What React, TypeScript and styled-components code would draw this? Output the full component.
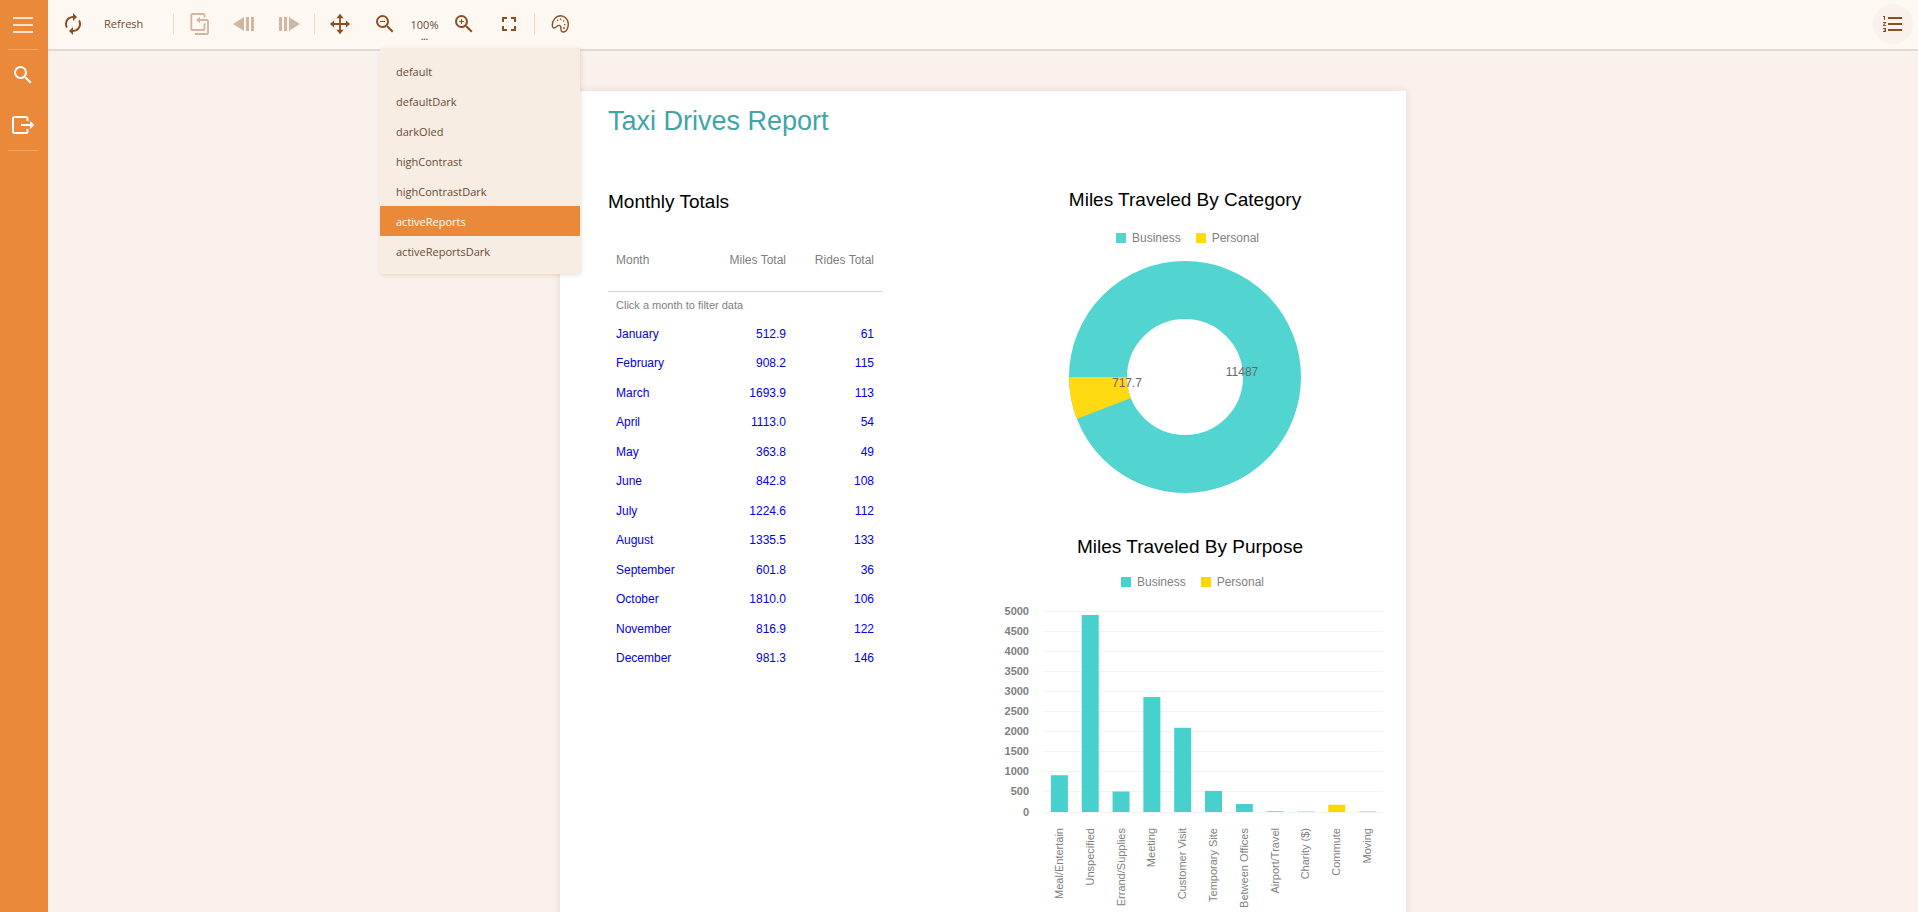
import React from "react";
import styled, { createGlobalStyle, ThemeProvider } from "styled-components";
import {
  MdAutorenew,
  MdFormatListNumbered,
  MdFullscreen,
  MdSearch,
  MdZoomIn,
  MdZoomOut,
} from "react-icons/md";

const theme = {
  accent: "#e98939",
  brown: "#8d4f22",
  text: "#6b4a33",
  toolbar: "#fdf8f1",
  canvas: "#faf1ec",
  menu: "#f7ede3",
  divider: "#ecdac9",
  teal: "#48d1cc",
  gold: "#ffd700",
  ui: '"Open Sans", "Noto Sans", sans-serif',
  report: '"Liberation Sans", Arial, sans-serif',
};

const GlobalStyle = createGlobalStyle`
  * { box-sizing: border-box; }
  body { margin: 0; }
  button { border: 0; padding: 0; background: none; color: inherit; font: inherit; cursor: pointer; }
  svg { display: block; }
`;

const Shell = styled.div`
  display: flex;
  height: 100vh;
  background: ${(p) => p.theme.canvas};
  font-family: ${(p) => p.theme.ui};
  font-size: 11px;
`;

const Sidebar = styled.nav`
  flex: 0 0 48px;
  display: flex;
  flex-direction: column;
  align-items: center;
  padding-right: 2px;
  background: ${(p) => p.theme.accent};
  color: #fff;
`;

const SideButton = styled.button<{ $height: number }>`
  display: grid;
  place-items: center;
  width: 46px;
  height: ${(p) => p.$height}px;
`;

const SideDivider = styled.span`
  width: 30px;
  height: 1px;
  background: rgba(255, 255, 255, 0.25);
`;

const Viewer = styled.div`
  flex: 1;
  min-width: 0;
  display: flex;
  flex-direction: column;
`;

const Toolbar = styled.header`
  display: flex;
  align-items: center;
  gap: 5px;
  padding: 4px 5px 5px;
  background: ${(p) => p.theme.toolbar};
  border-bottom: 2px solid #dfdad6;
  color: ${(p) => p.theme.brown};
`;

const ToolButton = styled.button<{ $raised?: boolean }>`
  display: grid;
  place-items: center;
  width: 40px;
  height: 40px;
  border-radius: 50%;
  background: ${(p) => (p.$raised ? p.theme.canvas : "none")};

  &:disabled {
    color: #d3b6a1;
    cursor: default;
  }
`;

const RefreshButton = styled.button`
  display: flex;
  align-items: center;
  gap: 19px;
  width: 115px;
  height: 40px;
  padding-left: 8px;
`;

const ToolText = styled.span`
  color: ${(p) => p.theme.text};
  line-height: 16px;
`;

const ZoomValue = styled.button`
  display: flex;
  flex-direction: column;
  align-items: center;
  justify-content: flex-end;
  width: 29px;
  height: 40px;
  color: ${(p) => p.theme.text};
  line-height: 16px;
`;

const Dots = styled.span`
  height: 11px;
  font-size: 8px;
  font-weight: 700;
  line-height: 8px;
`;

const Separator = styled.span`
  width: 1px;
  height: 20px;
  background: ${(p) => p.theme.divider};
`;

const Spacer = styled.span`
  flex: 1;
`;

const ThemePicker = styled.div`
  position: relative;
`;

const Menu = styled.div`
  position: absolute;
  z-index: 2;
  top: 44px;
  right: 0;
  display: flex;
  flex-direction: column;
  width: 200px;
  padding: 8px 0;
  border-radius: 2px;
  background: ${(p) => p.theme.menu};
  box-shadow: 1px 1px 4px rgba(141, 79, 34, 0.18);
`;

const MenuItem = styled.button<{ $selected: boolean }>`
  height: 30px;
  padding: 0 16px;
  text-align: left;
  color: ${(p) => (p.$selected ? "#fff" : p.theme.text)};
  background: ${(p) => (p.$selected ? p.theme.accent : "none")};
`;

const Canvas = styled.main`
  flex: 1;
  min-height: 0;
  display: flex;
  justify-content: center;
  align-items: flex-start;
  padding: 40px 16px;
  overflow: auto;
  scrollbar-width: none;
`;

const Paper = styled.article`
  width: 100%;
  max-width: 846px;
  padding: 14px 16px 160px 48px;
  background: #fff;
  box-shadow: 0 0 8px rgba(80, 40, 20, 0.12);
  font-family: ${(p) => p.theme.report};
  font-size: 12px;
  line-height: 14px;
  color: #808080;
`;

const Title = styled.h1`
  margin: 0 0 51px;
  font-size: 27px;
  font-weight: 400;
  line-height: 32px;
  color: #3fa5a8;
`;

const Heading = styled.h2`
  margin: 0;
  font-size: 19px;
  font-weight: 400;
  line-height: 24px;
  color: #000;
`;

const Columns = styled.div`
  display: grid;
  grid-template-columns: 274px minmax(0, 410px);
  justify-content: space-between;
  align-items: start;
`;

const Totals = styled.section`
  padding-top: 2px;
`;

const TotalsTable = styled.table`
  width: 100%;
  margin-top: 31px;
  border-collapse: collapse;
  table-layout: fixed;
`;

const HeadCell = styled.th<{ $right?: boolean; $width: number }>`
  width: ${(p) => p.$width}px;
  padding: 8px 8px 24px;
  border-bottom: 1px solid #d3d3d3;
  font-weight: 400;
  text-align: ${(p) => (p.$right ? "right" : "left")};
`;

const HintCell = styled.td`
  height: 27px;
  padding: 6px 8px 0;
  vertical-align: top;
  font-size: 11px;
`;

const MonthRow = styled.tr`
  height: 29px;
  color: #0000ee;

  &:nth-child(odd) {
    height: 30px;
  }
`;

const Cell = styled.td<{ $right?: boolean }>`
  padding: 8px 8px 0;
  vertical-align: top;
  text-align: ${(p) => (p.$right ? "right" : "left")};
`;

const MonthLink = styled.a`
  color: inherit;
  text-decoration: none;
`;

const Charts = styled.section`
  display: flex;
  flex-direction: column;
  gap: 26px;
`;

const Chart = styled.figure`
  margin: 0;
`;

const ChartHead = styled.figcaption<{ $gap: number; $inset?: number }>`
  display: flex;
  flex-direction: column;
  align-items: center;
  gap: ${(p) => p.$gap}px;
  padding-left: ${(p) => p.$inset ?? 0}px;
`;

const Legend = styled.ul`
  display: flex;
  gap: 15px;
  margin: 0;
  padding: 0 0 0 5px;
  list-style: none;
`;

const LegendItem = styled.li`
  display: flex;
  align-items: center;
  gap: 6px;
`;

const Swatch = styled.span<{ $color: string }>`
  width: 10px;
  height: 10px;
  background: ${(p) => p.$color};
`;

const Plot = styled.svg`
  width: 100%;
  height: auto;
  font-family: ${(p) => p.theme.report};
`;

const THEMES = [
  "default",
  "defaultDark",
  "darkOled",
  "highContrast",
  "highContrastDark",
  "activeReports",
  "activeReportsDark",
];

const MONTHS: [string, string, number][] = [
  ["January", "512.9", 61],
  ["February", "908.2", 115],
  ["March", "1693.9", 113],
  ["April", "1113.0", 54],
  ["May", "363.8", 49],
  ["June", "842.8", 108],
  ["July", "1224.6", 112],
  ["August", "1335.5", 133],
  ["September", "601.8", 36],
  ["October", "1810.0", 106],
  ["November", "816.9", 122],
  ["December", "981.3", 146],
];

const PURPOSES: { name: string; miles: number; personal?: boolean }[] = [
  { name: "Meal/Entertain", miles: 915 },
  { name: "Unspecified", miles: 4900 },
  { name: "Errand/Supplies", miles: 510 },
  { name: "Meeting", miles: 2860 },
  { name: "Customer Visit", miles: 2095 },
  { name: "Temporary Site", miles: 525 },
  { name: "Between Offices", miles: 200 },
  { name: "Airport/Travel", miles: 17 },
  { name: "Charity ($)", miles: 15, personal: true },
  { name: "Commute", miles: 180, personal: true },
  { name: "Moving", miles: 18, personal: true },
];

const Icon = ({ children }: { children: React.ReactNode }) => (
  <svg width="24" height="24" viewBox="0 0 24 24" fill="currentColor" aria-hidden="true">
    {children}
  </svg>
);

const MenuIcon = () => (
  <Icon>
    <path d="M2 5h20M2 12h20M2 19h20" fill="none" stroke="currentColor" strokeWidth="1.6" />
  </Icon>
);

const ExportIcon = () => (
  <Icon>
    <path
      d="M16.500 8V5.500a1.500 1.500 0 0 0-1.500-1.500H3.500A1.500 1.500 0 0 0 2 5.500V18.500A1.500 1.500 0 0 0 3.500 20H15a1.500 1.500 0 0 0 1.500-1.500V16"
      fill="none"
      stroke="currentColor"
      strokeWidth="2"
    />
    <path d="M10 11h9V7.800L23.200 12 19 16.200V13h-9z" />
  </Icon>
);

const HistoryIcon = () => (
  <Icon>
    <path
      d="M17.500 5.500V3a1 1 0 0 0-1-1H5.300a1 1 0 0 0-1 1V17a1 1 0 0 0 1 1H16.500a1 1 0 0 0 1-1V11.500M10.500 8H20a1 1 0 0 1 1 1V21a1 1 0 0 1-1 1H8"
      fill="none"
      stroke="currentColor"
      strokeWidth="1.800"
    />
    <path d="M9 8l4-3.300v6.600z" />
  </Icon>
);

const PreviousIcon = () => (
  <Icon>
    <path d="M1 12L12 5v14zM14 5h3v14h-3zM19 5h3v14h-3z" />
  </Icon>
);

const NextIcon = () => (
  <Icon>
    <path d="M23 12L12 5v14zM7 5h3v14H7zM2 5h3v14H2z" />
  </Icon>
);

const MoveIcon = () => (
  <Icon>
    <path d="M12 4v16M4 12h16" fill="none" stroke="currentColor" strokeWidth="1.800" />
    <path d="M12 1.800l3.600 4.400H8.400zM12 22.200l3.600-4.400H8.400zM1.800 12l4.400-3.600v7.200zM22.200 12l-4.400-3.600v7.200z" />
  </Icon>
);

const PaletteIcon = () => (
  <Icon>
    <path
      d="M4.300 13.500C4.300 8 7.800 3.800 12.400 3.800c4.600 0 7.900 3.700 7.900 8.300 0 4.400-1.900 7.900-4.700 7.900-2.200 0-2.700-1.500-2.600-3 .1-1.900-.3-3.300-1.700-3.600-1.600-.3-2.600 1.500-4.200 2.300-1.600.8-2.800-.5-2.800-2.200z"
      fill="none"
      stroke="currentColor"
      strokeWidth="1.400"
    />
    <circle cx="9.500" cy="8.300" r="0.800" />
    <circle cx="12.700" cy="7.300" r="0.800" />
    <circle cx="15.700" cy="9" r="0.800" />
    <circle cx="16.700" cy="12.500" r="0.800" />
    <circle cx="16" cy="16" r="0.900" />
  </Icon>
);

const ChartLegend = ({ teal, gold }: { teal: string; gold: string }) => (
  <Legend>
    <LegendItem>
      <Swatch $color={teal} />
      Business
    </LegendItem>
    <LegendItem>
      <Swatch $color={gold} />
      Personal
    </LegendItem>
  </Legend>
);

const CategoryDonut = () => {
  const cx = 205;
  const cy = 132;
  const outer = 116;
  const inner = 58;
  const sweep = (717.7 / 12204.7) * 2 * Math.PI;
  const at = (r: number, a: number) => `${cx - r * Math.cos(a)} ${cy + r * Math.sin(a)}`;
  return (
    <Plot viewBox="0 0 410 264" role="img" aria-label="Miles traveled by category">
      <circle cx={cx} cy={cy} r={(outer + inner) / 2} fill="none" stroke="#52d5d0" strokeWidth={outer - inner} />
      <path
        d={`M${at(outer, 0)}A${outer} ${outer} 0 0 0 ${at(outer, sweep)}L${at(inner, sweep)}A${inner} ${inner} 0 0 1 ${at(inner, 0)}Z`}
        fill="#ffd911"
      />
      <g fontSize="12" fill="#666" textAnchor="middle">
        <text x="262" y="131">11487</text>
        <text x="147" y="142">717.7</text>
      </g>
    </Plot>
  );
};

const PurposeBars = () => {
  const left = 64;
  const right = 403;
  const base = 223;
  const height = 201;
  const slot = (right - left) / PURPOSES.length;
  const yOf = (v: number) => base - (v / 5000) * height;
  const ticks = Array.from({ length: 11 }, (_, i) => i * 500);
  return (
    <Plot viewBox="0 0 410 330" role="img" aria-label="Miles traveled by purpose">
      {ticks.map((t) => (
        <g key={t}>
          <line x1={left} x2={right} y1={Math.floor(yOf(t)) + 0.5} y2={Math.floor(yOf(t)) + 0.5} stroke="#f3f3f3" />
          <text x="49" y={Math.floor(yOf(t)) + 4} fontSize="11" fontWeight="700" fill="#808080" textAnchor="end">
            {t}
          </text>
        </g>
      ))}
      {PURPOSES.map((p, i) => {
        const center = left + slot * (i + 0.5);
        return (
          <g key={p.name}>
            <rect
              x={center - 8.5}
              y={yOf(p.miles)}
              width="17"
              height={base - yOf(p.miles)}
              fill={p.personal ? theme.gold : theme.teal}
            />
            <text
              transform={`translate(${Math.floor(center) + 4} 239) rotate(-90)`}
              fontSize="11"
              fill="#808080"
              textAnchor="end"
            >
              {p.name}
            </text>
          </g>
        );
      })}
    </Plot>
  );
};

export default function App() {
  const [selected, setSelected] = React.useState("activeReports");

  return (
    <ThemeProvider theme={theme}>
      <GlobalStyle />
      <Shell>
        <Sidebar aria-label="Panels">
          <SideButton $height={49} aria-label="Menu">
            <MenuIcon />
          </SideButton>
          <SideDivider />
          <SideButton $height={50} aria-label="Search">
            <MdSearch size={24} />
          </SideButton>
          <SideButton $height={50} aria-label="Export">
            <ExportIcon />
          </SideButton>
          <SideDivider />
        </Sidebar>
        <Viewer>
          <Toolbar>
            <RefreshButton>
              <MdAutorenew size={24} />
              <ToolText>Refresh</ToolText>
            </RefreshButton>
            <Separator />
            <ToolButton disabled aria-label="Back to parent">
              <HistoryIcon />
            </ToolButton>
            <ToolButton disabled aria-label="History back">
              <PreviousIcon />
            </ToolButton>
            <ToolButton disabled aria-label="History forward">
              <NextIcon />
            </ToolButton>
            <Separator />
            <ToolButton aria-label="Pan">
              <MoveIcon />
            </ToolButton>
            <ToolButton aria-label="Zoom out">
              <MdZoomOut size={24} />
            </ToolButton>
            <ZoomValue>
              <span>100%</span>
              <Dots>...</Dots>
            </ZoomValue>
            <ToolButton aria-label="Zoom in">
              <MdZoomIn size={24} />
            </ToolButton>
            <ToolButton aria-label="Fullscreen">
              <MdFullscreen size={24} />
            </ToolButton>
            <Separator />
            <ThemePicker>
              <ToolButton aria-label="Theme" aria-haspopup="menu" aria-expanded="true">
                <PaletteIcon />
              </ToolButton>
              <Menu role="menu">
                {THEMES.map((name) => (
                  <MenuItem key={name} role="menuitem" $selected={name === selected} onClick={() => setSelected(name)}>
                    {name}
                  </MenuItem>
                ))}
              </Menu>
            </ThemePicker>
            <Spacer />
            <ToolButton $raised aria-label="Table of contents">
              <MdFormatListNumbered size={24} />
            </ToolButton>
          </Toolbar>
          <Canvas>
            <Paper>
              <Title>Taxi Drives Report</Title>
              <Columns>
                <Totals>
                  <Heading>Monthly Totals</Heading>
                  <TotalsTable>
                    <thead>
                      <tr>
                        <HeadCell $width={90}>Month</HeadCell>
                        <HeadCell $width={96} $right>Miles Total</HeadCell>
                        <HeadCell $width={88} $right>Rides Total</HeadCell>
                      </tr>
                    </thead>
                    <tbody>
                      <tr>
                        <HintCell colSpan={3}>Click a month to filter data</HintCell>
                      </tr>
                      {MONTHS.map(([month, miles, rides]) => (
                        <MonthRow key={month}>
                          <Cell>
                            <MonthLink href={`#${month}`}>{month}</MonthLink>
                          </Cell>
                          <Cell $right>{miles}</Cell>
                          <Cell $right>{rides}</Cell>
                        </MonthRow>
                      ))}
                    </tbody>
                  </TotalsTable>
                </Totals>
                <Charts>
                  <Chart>
                    <ChartHead $gap={19}>
                      <Heading>Miles Traveled By Category</Heading>
                      <ChartLegend teal="#52d5d0" gold="#ffd911" />
                    </ChartHead>
                    <CategoryDonut />
                  </Chart>
                  <Chart>
                    <ChartHead $gap={16} $inset={10}>
                      <Heading>Miles Traveled By Purpose</Heading>
                      <ChartLegend teal={theme.teal} gold={theme.gold} />
                    </ChartHead>
                    <PurposeBars />
                  </Chart>
                </Charts>
              </Columns>
            </Paper>
          </Canvas>
        </Viewer>
      </Shell>
    </ThemeProvider>
  );
}
